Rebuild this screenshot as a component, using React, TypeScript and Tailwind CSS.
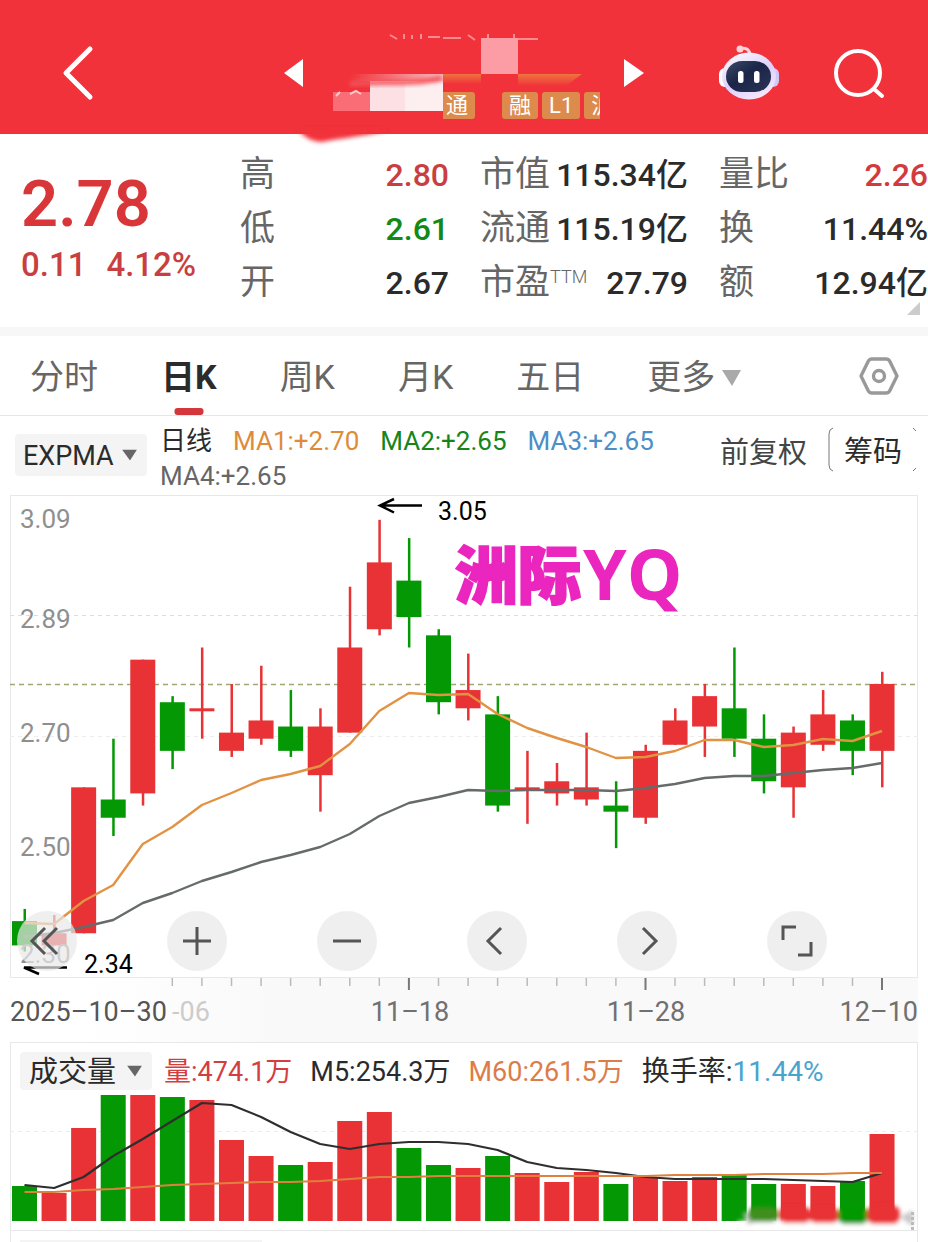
import type { ReactNode } from "react";

const RED = "#e83235";
const GREEN = "#049904";

const STEP = 29.57;
const FIRST = 14.5;
const BAR = 25;

// [open, close, high, low]
const candles: [number, number, number, number][] = [
  [2.39, 2.35, 2.41, 2.34],
  [2.35, 2.37, 2.4, 2.35],
  [2.37, 2.61, 2.61, 2.37],
  [2.59, 2.56, 2.69, 2.53],
  [2.6, 2.82, 2.82, 2.58],
  [2.75, 2.67, 2.76, 2.64],
  [2.74, 2.74, 2.84, 2.69],
  [2.67, 2.7, 2.78, 2.66],
  [2.69, 2.72, 2.81, 2.68],
  [2.71, 2.67, 2.77, 2.66],
  [2.63, 2.71, 2.74, 2.57],
  [2.7, 2.84, 2.94, 2.7],
  [2.87, 2.98, 3.05, 2.86],
  [2.95, 2.89, 3.02, 2.84],
  [2.86, 2.75, 2.87, 2.73],
  [2.74, 2.77, 2.83, 2.72],
  [2.73, 2.58, 2.76, 2.57],
  [2.61, 2.61, 2.67, 2.55],
  [2.6, 2.62, 2.65, 2.58],
  [2.59, 2.61, 2.7, 2.58],
  [2.58, 2.57, 2.62, 2.51],
  [2.56, 2.67, 2.68, 2.55],
  [2.68, 2.72, 2.74, 2.68],
  [2.71, 2.76, 2.78, 2.66],
  [2.74, 2.69, 2.84, 2.66],
  [2.69, 2.62, 2.73, 2.6],
  [2.61, 2.7, 2.71, 2.56],
  [2.68, 2.73, 2.77, 2.67],
  [2.72, 2.67, 2.73, 2.63],
  [2.67, 2.78, 2.8, 2.61],
];

const ma1 = [428, 429, 406, 390, 349, 332, 310, 298, 285, 279, 271, 249, 216, 198, 200, 199, 219, 233, 243, 252, 263, 262, 256, 245, 245, 252, 250, 244, 246, 236];
const ma4 = [442, 438, 432, 425, 408, 398, 386, 377, 367, 360, 352, 339, 321, 308, 302, 295, 296, 295, 295, 295, 296, 293, 289, 283, 281, 281, 278, 275, 273, 268];

const volumes = [35, 28, 93, 126, 126, 124, 121, 81, 65, 56, 59, 100, 109, 73, 56, 53, 65, 48, 39, 49, 37, 44, 40, 44, 46, 37, 37, 35, 40, 87];
const volM5 = [36, 33, 44, 65, 82, 100, 118, 116, 104, 89, 77, 72, 77, 79, 79, 77, 71, 59, 53, 51, 48, 44, 42, 42, 42, 42, 41, 40, 39, 48];
const volM60 = [29, 29, 31, 32, 34, 36, 37, 38, 39, 39, 40, 42, 44, 44, 45, 45, 45, 45, 45, 45, 45, 45, 46, 46, 46, 47, 47, 47, 48, 48];

const x = (i: number) => FIRST + STEP * i;
const y = (price: number) => (3.09 - price) * 608 + 0.5;
const isUp = (i: number) => candles[i][1] >= candles[i][0];
const points = (ys: number[]) => ys.map((v, i) => `${x(i).toFixed(1)},${v}`).join(" ");

function Tag({ children }: { children: ReactNode }) {
  return <span className="h-[27px] min-w-[36px] shrink-0 rounded-[3px] bg-[#dd8b4c] px-[7px] text-[22px] leading-[27px] text-white">{children}</span>;
}

function Header() {
  return (
    <header className="relative z-10 grid h-[134px] grid-cols-[1fr_auto_1fr] items-center bg-[#f1323a] pt-3">
      <div className="pl-[60px]">
        <button type="button" aria-label="返回" className="block">
          <svg width="36" height="56" viewBox="0 0 36 56" fill="none" stroke="#fff" strokeWidth="5" strokeLinecap="round" strokeLinejoin="round">
            <path d="M30 4 6 28 30 52" />
          </svg>
        </button>
      </div>
      <div className="flex items-center">
        <button type="button" aria-label="上一只">
          <svg width="19" height="30" viewBox="0 0 19 30"><path d="M0 15 19 1V29Z" fill="#fff" /></svg>
        </button>
        <div className="relative ml-[30px] mr-6 flex h-[91px] w-[267px] flex-col justify-end">
          <svg className="absolute inset-0 h-full w-full overflow-visible" viewBox="333 28 267 91">
            <defs>
              <filter id="smear" x="-20%" y="-60%" width="140%" height="220%"><feGaussianBlur stdDeviation="2" /></filter>
              <linearGradient id="fadeL" x1="0" x2="1"><stop offset="0" stopColor="#fff" stopOpacity="0" /><stop offset="1" stopColor="#fff" stopOpacity=".7" /></linearGradient>
              <linearGradient id="fadeO" x1="0" x2="0" y1="0" y2="1"><stop offset="0" stopColor="#ee7440" /><stop offset="1" stopColor="#f1323a" /></linearGradient>
            </defs>
            <path d="M298 130H388C362 137 334 139 322 142C312 142 304 137 298 130Z" fill="#f1323a" filter="url(#smear)" />
            <g stroke="#f98c90" strokeWidth="2" fill="none">
              <path d="M390 35 397 39M404 34v5M412 35v4M421 34v5M428 37h12M443 38h18M468 35 475 40" />
              <path d="M488 34v6M514 34v6M481 39h57" />
            </g>
            <rect x="481" y="38" width="37" height="36" fill="#fc9da5" />
            <path d="M443 74H481V84H443Z" fill="url(#fadeO)" />
            <path d="M518 74H582L566 86H518Z" fill="url(#fadeO)" />
            <rect x="350" y="74" width="93" height="7" fill="url(#fadeL)" />
            <rect x="333" y="92" width="37" height="19" fill="#fb6d76" />
            <path d="M336 96l4-4M350 94l6-3 5 3" stroke="#fdc8cb" strokeWidth="2" fill="none" />
            <rect x="370" y="81" width="73" height="30" fill="#fde0e4" />
            <rect x="405" y="83" width="38" height="28" fill="#fdeef0" />
            <path d="M350 84C380 80 410 86 442 78" stroke="#f3545b" strokeWidth="5" fill="none" filter="url(#smear)" />
          </svg>
          <div className="relative flex gap-1 overflow-hidden">
            <span className="ml-[110px] h-[27px] shrink-0 rounded-r-[3px] bg-[#dd8b4c] pl-[3px] pr-[7px] text-[22px] leading-[27px] text-white">通</span>
            <span className="w-[19px] shrink-0" />
            <Tag>融</Tag>
            <Tag>L1</Tag>
            <Tag>沪</Tag>
          </div>
        </div>
        <button type="button" aria-label="下一只">
          <svg width="20" height="30" viewBox="0 0 20 30"><path d="M20 15 0 1V29Z" fill="#fff" /></svg>
        </button>
      </div>
      <div className="flex items-center justify-end gap-[54px] pr-[43px]">
        <button type="button" aria-label="智能助手">
          <svg width="60" height="58" viewBox="0 0 60 58">
            <defs>
              <linearGradient id="shell" x1="0" y1="0" x2="0.6" y2="1"><stop offset="0" stopColor="#fff" /><stop offset=".6" stopColor="#dcd0fb" /><stop offset="1" stopColor="#f4e6fb" /></linearGradient>
              <linearGradient id="visor" x1="0" y1="0" x2="1" y2="1"><stop offset="0" stopColor="#3d4a66" /><stop offset=".45" stopColor="#1a2547" /><stop offset="1" stopColor="#2b3558" /></linearGradient>
            </defs>
            <path d="M21 5C26 3 30 5 31 10" fill="none" stroke="#fbd3d8" strokeWidth="3" strokeLinecap="round" />
            <circle cx="21" cy="5" r="3.5" fill="#fbd3d8" />
            <rect x="0" y="24" width="12" height="19" rx="6" fill="#fff" />
            <rect x="48" y="24" width="12" height="19" rx="6" fill="#cfc8f8" />
            <ellipse cx="30" cy="32" rx="27" ry="23.5" fill="url(#shell)" />
            <rect x="7" y="17" width="45" height="31" rx="16" fill="url(#visor)" />
            <rect x="19" y="27" width="5.5" height="12" rx="2.5" fill="#fff" />
            <rect x="35" y="27" width="5.5" height="12" rx="2.5" fill="#fff" />
          </svg>
        </button>
        <button type="button" aria-label="搜索">
          <svg width="52" height="52" viewBox="0 0 52 52" fill="none" stroke="#fff" strokeWidth="4" strokeLinecap="round">
            <circle cx="25" cy="26" r="22" />
            <path d="M41 42 49 49" />
          </svg>
        </button>
      </div>
    </header>
  );
}

function Stat({ label, sup, value, tone = "text-[#2b2b2b]" }: { label: string; sup?: string; value: string; tone?: string }) {
  return (
    <div className="flex h-[54px] items-center justify-between whitespace-nowrap">
      <dt className="flex text-[35px] leading-[54px] text-[#666]">
        {label}
        {sup && <sup className="top-0 text-[18px] font-light leading-[42px]">{sup}</sup>}
      </dt>
      <dd className={`text-[32px] font-medium leading-[54px] ${tone}`}>{value}</dd>
    </div>
  );
}

function Quote() {
  return (
    <section className="relative grid grid-cols-[209fr_209fr_208fr_209fr] gap-x-[31px] pb-[17px] pt-[14px]">
      <div className="whitespace-nowrap pl-[21px] pt-[22px] text-[#d9363a]">
        <div className="text-[65px] font-semibold leading-[68px]">2.78</div>
        <div className="flex gap-5 text-[33px] font-medium leading-[54px] text-[#c93f41]">
          <span>0.11</span>
          <span>4.12%</span>
        </div>
      </div>
      <dl>
        <Stat label="高" value="2.80" tone="text-[#c93f41]" />
        <Stat label="低" value="2.61" tone="text-[#118a16]" />
        <Stat label="开" value="2.67" />
      </dl>
      <dl>
        <Stat label="市值" value="115.34亿" />
        <Stat label="流通" value="115.19亿" />
        <Stat label="市盈" sup="TTM" value="27.79" />
      </dl>
      <dl>
        <Stat label="量比" value="2.26" tone="text-[#d43a3d]" />
        <Stat label="换" value="11.44%" />
        <Stat label="额" value="12.94亿" />
      </dl>
      <svg className="absolute bottom-3 right-2" width="13" height="13"><path d="M13 0V13H0Z" fill="#ccc" /></svg>
    </section>
  );
}

function Tabs() {
  const tabs = ["分时", "日K", "周K", "月K", "五日"];
  return (
    <nav className="flex h-[80px] gap-[63px] border-b border-[#e6e6e6] pl-[30px] pr-[29px] text-[34px] text-[#666]">
      {tabs.map((tab) =>
        tab === "日K" ? (
          <button key={tab} type="button" aria-current="page" className="relative whitespace-nowrap pt-1 font-bold text-[#2b2b2b]">
            {tab}
            <span className="absolute bottom-0 left-1/2 h-[7px] w-[29px] -translate-x-1/2 rounded-[3px] bg-[#d3373b]" />
          </button>
        ) : (
          <button key={tab} type="button" className="whitespace-nowrap pt-1">{tab}</button>
        )
      )}
      <button type="button" className="flex items-center gap-[7px] whitespace-nowrap pt-1">
        更多
        <svg width="19" height="16"><path d="M0 0H19L10 16Z" fill="#a9a9a9" /></svg>
      </button>
      <button type="button" aria-label="设置" className="ml-auto">
        <svg width="40" height="40" viewBox="0 0 40 40" fill="none" stroke="#999" strokeWidth="3.4" strokeLinejoin="round">
          <path d="M12.5 3H27.5Q29.500 3 30.500 4.800L38 20 30.500 35.200Q29.500 37 27.500 37H12.500Q10.500 37 9.500 35.200L2 20 9.500 4.800Q10.500 3 12.500 3Z" />
          <circle cx="20" cy="20" r="5.500" />
        </svg>
      </button>
    </nav>
  );
}

function Picker({ label, value, size }: { label: string; value: string; size: string }) {
  return (
    <div className="relative shrink-0">
      <select aria-label={label} defaultValue={value} className={`block w-[132px] appearance-none rounded bg-[#f4f4f4] text-[#2b2b2b] ${size}`}>
        <option>{value}</option>
      </select>
      <svg className="pointer-events-none absolute right-[10px] top-1/2 -translate-y-1/2" width="15" height="11"><path d="M0 0H15L8 11Z" fill="#666" /></svg>
    </div>
  );
}

function Indicators() {
  return (
    <section className="flex h-[79px] items-start pl-[15px] pr-[10px]">
      <div className="pt-[18px]">
        <Picker label="指标" value="EXPMA" size="h-[42px] pl-[8px] pt-[2px] text-[27px]" />
      </div>
      <div className="ml-[13px] mt-[8px] flex flex-1 flex-wrap gap-x-[21px] whitespace-nowrap text-[26px] leading-[35px]">
        <span className="text-[#2b2b2b]">日线</span>
        <span className="text-[#de8c3a]">MA1:+2.70</span>
        <span className="text-[#15851a]">MA2:+2.65</span>
        <span className="text-[#4c8ec6]">MA3:+2.65</span>
        <span className="text-[#666]">MA4:+2.65</span>
      </div>
      <button type="button" className="mt-[11px] h-[45px] whitespace-nowrap pt-[5px] text-[29px] text-[#444]">前复权</button>
      <button type="button" className="relative ml-[21px] mt-[11px] h-[45px] w-[90px] whitespace-nowrap pt-[4px] text-[29px] text-[#2b2b2b]">
        筹码
        <svg className="absolute inset-0" width="90" height="45" fill="none" stroke="#777">
          <path d="M5 1Q1 2 1 7V38Q1 43 5 44M85 1 88 4M85 44 88 41" />
        </svg>
      </button>
    </section>
  );
}

function ChartButton({ label, d }: { label: string; d: string }) {
  return (
    <button type="button" aria-label={label} className="flex h-[60px] w-[60px] items-center justify-center rounded-full bg-[#e8e8e8]/70">
      <svg width="36" height="36" viewBox="0 0 36 36" fill="none" stroke="#555" strokeWidth="3"><path d={d} /></svg>
    </button>
  );
}

function KLine() {
  return (
    <section className="mx-[10px]">
      <div className="relative">
        <svg className="block w-full overflow-visible" viewBox="0 0 908 482" fontFamily="Roboto, sans-serif">
          <rect x="0.5" y="0.5" width="907" height="482" fill="none" stroke="#e8e8e8" />
          <g stroke="#dcdcdc" strokeDasharray="4 4">
            <path d="M0 120.5H908" />
            <path d="M0 241.5H908" stroke="#ededed" />
          </g>
          <path d="M0 189.500H908" stroke="#a2a674" strokeWidth="1.500" strokeDasharray="5 4" />
          {candles.map(([open, close, high, low], i) => {
            const fill = isUp(i) ? RED : GREEN;
            const top = y(Math.max(open, close));
            const height = Math.max(y(Math.min(open, close)) - top, 3);
            return (
              <g key={i} fill={fill}>
                <rect x={x(i) - 1} y={y(high)} width="2.5" height={y(low) - y(high)} />
                <rect x={x(i) - BAR / 2} y={top} width={BAR} height={height} />
              </g>
            );
          })}
          <g fill="none" strokeWidth="2.4" strokeLinejoin="round">
            <polyline points={points(ma4)} stroke="#666a6a" />
            <polyline points={points(ma1)} stroke="#e29243" />
          </g>
          <g fontSize="26" fill="#8f8f8f">
            <text x="10" y="33">3.09</text>
            <text x="10" y="133">2.89</text>
            <text x="10" y="247">2.70</text>
            <text x="10" y="361">2.50</text>
            <text x="10" y="468">2.30</text>
          </g>
          <g fill="none" stroke="#000" strokeWidth="2.500">
            <path d="M412 10.500H370M384 4 370 10.500 384 17.500" />
            <path d="M57 472.500H14L29 479" />
          </g>
          <g fontSize="25" fill="#000">
            <text x="428" y="25">3.05</text>
            <text x="74" y="478">2.34</text>
          </g>
          <g fill="#ea26bf">
            <text x="445" y="103" fontSize="63" fontWeight="900" stroke="#ea26bf" strokeWidth="2" fontFamily="'Noto Sans CJK SC', sans-serif">洲际</text>
            <text x="573" y="105" fontSize="70" fontWeight="700" fontFamily="'Open Sans', sans-serif">YQ</text>
          </g>
        </svg>
        <div className="absolute inset-x-0 bottom-[6px] flex justify-between pl-[7px] pr-[91px]">
          <ChartButton label="最早" d="M16 5 3 18 16 31M28 5 15 18 28 31" />
          <ChartButton label="放大" d="M18 4V32M4 18H32" />
          <ChartButton label="缩小" d="M4 18H32" />
          <ChartButton label="向左" d="M22 5 9 18 22 31" />
          <ChartButton label="向右" d="M14 5 27 18 14 31" />
          <ChartButton label="全屏" d="M4 17V4H17M32 19V32H19" />
        </div>
      </div>
      <div className="bg-linear-to-r from-white from-8% via-[#f9f9f9] via-30% to-[#f9f9f9]">
        <svg className="block w-full" viewBox="0 0 908 65" fontFamily="Roboto, sans-serif">
          {candles.map((_, i) => {
            if (i < 5) return null;
            const major = i > 5 && i % 8 === 5;
            return <path key={i} d={`M${x(i).toFixed(1)} 1V${major ? 13 : 9}`} stroke={major ? "#777" : "#bbb"} strokeWidth={major ? 2 : 1.5} />;
          })}
          <g fontSize="27" fill="#707070">
            <text x="0" y="44" fill="#555">2025–10–30</text>
            <text x="162" y="44" fill="#ccc">-06</text>
            <text x="400" y="44" textAnchor="middle">11–18</text>
            <text x="636" y="44" textAnchor="middle">11–28</text>
            <text x="908" y="44" textAnchor="end">12–10</text>
          </g>
        </svg>
      </div>
    </section>
  );
}

function Volume() {
  return (
    <section className="mx-[10px] border border-[#e8e8e8]">
      <div className="flex h-[48px] items-start gap-[18px] whitespace-nowrap pl-[9px] pt-[9px] text-[27px] leading-[40px]">
        <div className="-mr-[6px]">
          <Picker label="副图指标" value="成交量" size="h-[38px] pl-[9px] pt-[2px] text-[29px] leading-[36px]" />
        </div>
        <span className="text-[#d23f41]">量:474.1万</span>
        <span className="text-[#2b2b2b]">M5:254.3万</span>
        <span className="text-[#dc7c48]">M60:261.5万</span>
        <span className="text-[28px] text-[#2b2b2b]">换手率:<span className="text-[#4aa3cf]">11.44%</span></span>
      </div>
      <svg className="block w-full" viewBox="1 0 906 139">
        <path d="M0 40.500H908" stroke="#ededed" strokeDasharray="4 4" />
        {volumes.map((v, i) => (
          <rect key={i} x={x(i) - BAR / 2} y={130 - v} width={BAR} height={v} fill={isUp(i) ? RED : GREEN} />
        ))}
        <g fill="none" strokeWidth="2.200" strokeLinejoin="round">
          <polyline points={points(volM5.map((v) => 130 - v))} stroke="#2e2e2e" />
          <polyline points={points(volM60.map((v) => 130 - v))} stroke="#e0803f" />
        </g>
        <g filter="url(#smear)">
          <path d="M728 130H905V139H728Z" fill="#fff" />
          <path d="M733 122H745L748 130 738 134Z" fill="#cfc9c9" />
          <rect x="738" y="116" width="30" height="15" rx="7" fill="#3f8f1c" />
          <rect x="769" y="116" width="32" height="16" rx="7" fill={RED} />
          <rect x="799" y="117" width="30" height="15" rx="7" fill={RED} />
          <rect x="828" y="116" width="30" height="17" rx="7" fill={GREEN} />
          <rect x="857" y="115" width="33" height="18" rx="7" fill={RED} />
          <path d="M890 126 903 119V136Z" fill="#c9c9c9" />
        </g>
        <path d="M902.500 121V139" stroke="#bbb" strokeWidth="3" strokeDasharray="3 2" />
      </svg>
    </section>
  );
}

export default function App() {
  return (
    <div className="min-h-screen overflow-hidden bg-white font-[Roboto,'Noto_Sans_CJK_SC',sans-serif]">
      <Header />
      <main>
        <Quote />
        <div className="h-[9px] bg-[#f7f7f7]" />
        <Tabs />
        <Indicators />
        <KLine />
        <Volume />
        <div className="mx-[10px] flex h-[11px] items-end border-x border-[#e8e8e8] pl-[9px]">
          <span className="h-[2px] w-[242px] bg-[#f4f4f4]" />
        </div>
      </main>
    </div>
  );
}
